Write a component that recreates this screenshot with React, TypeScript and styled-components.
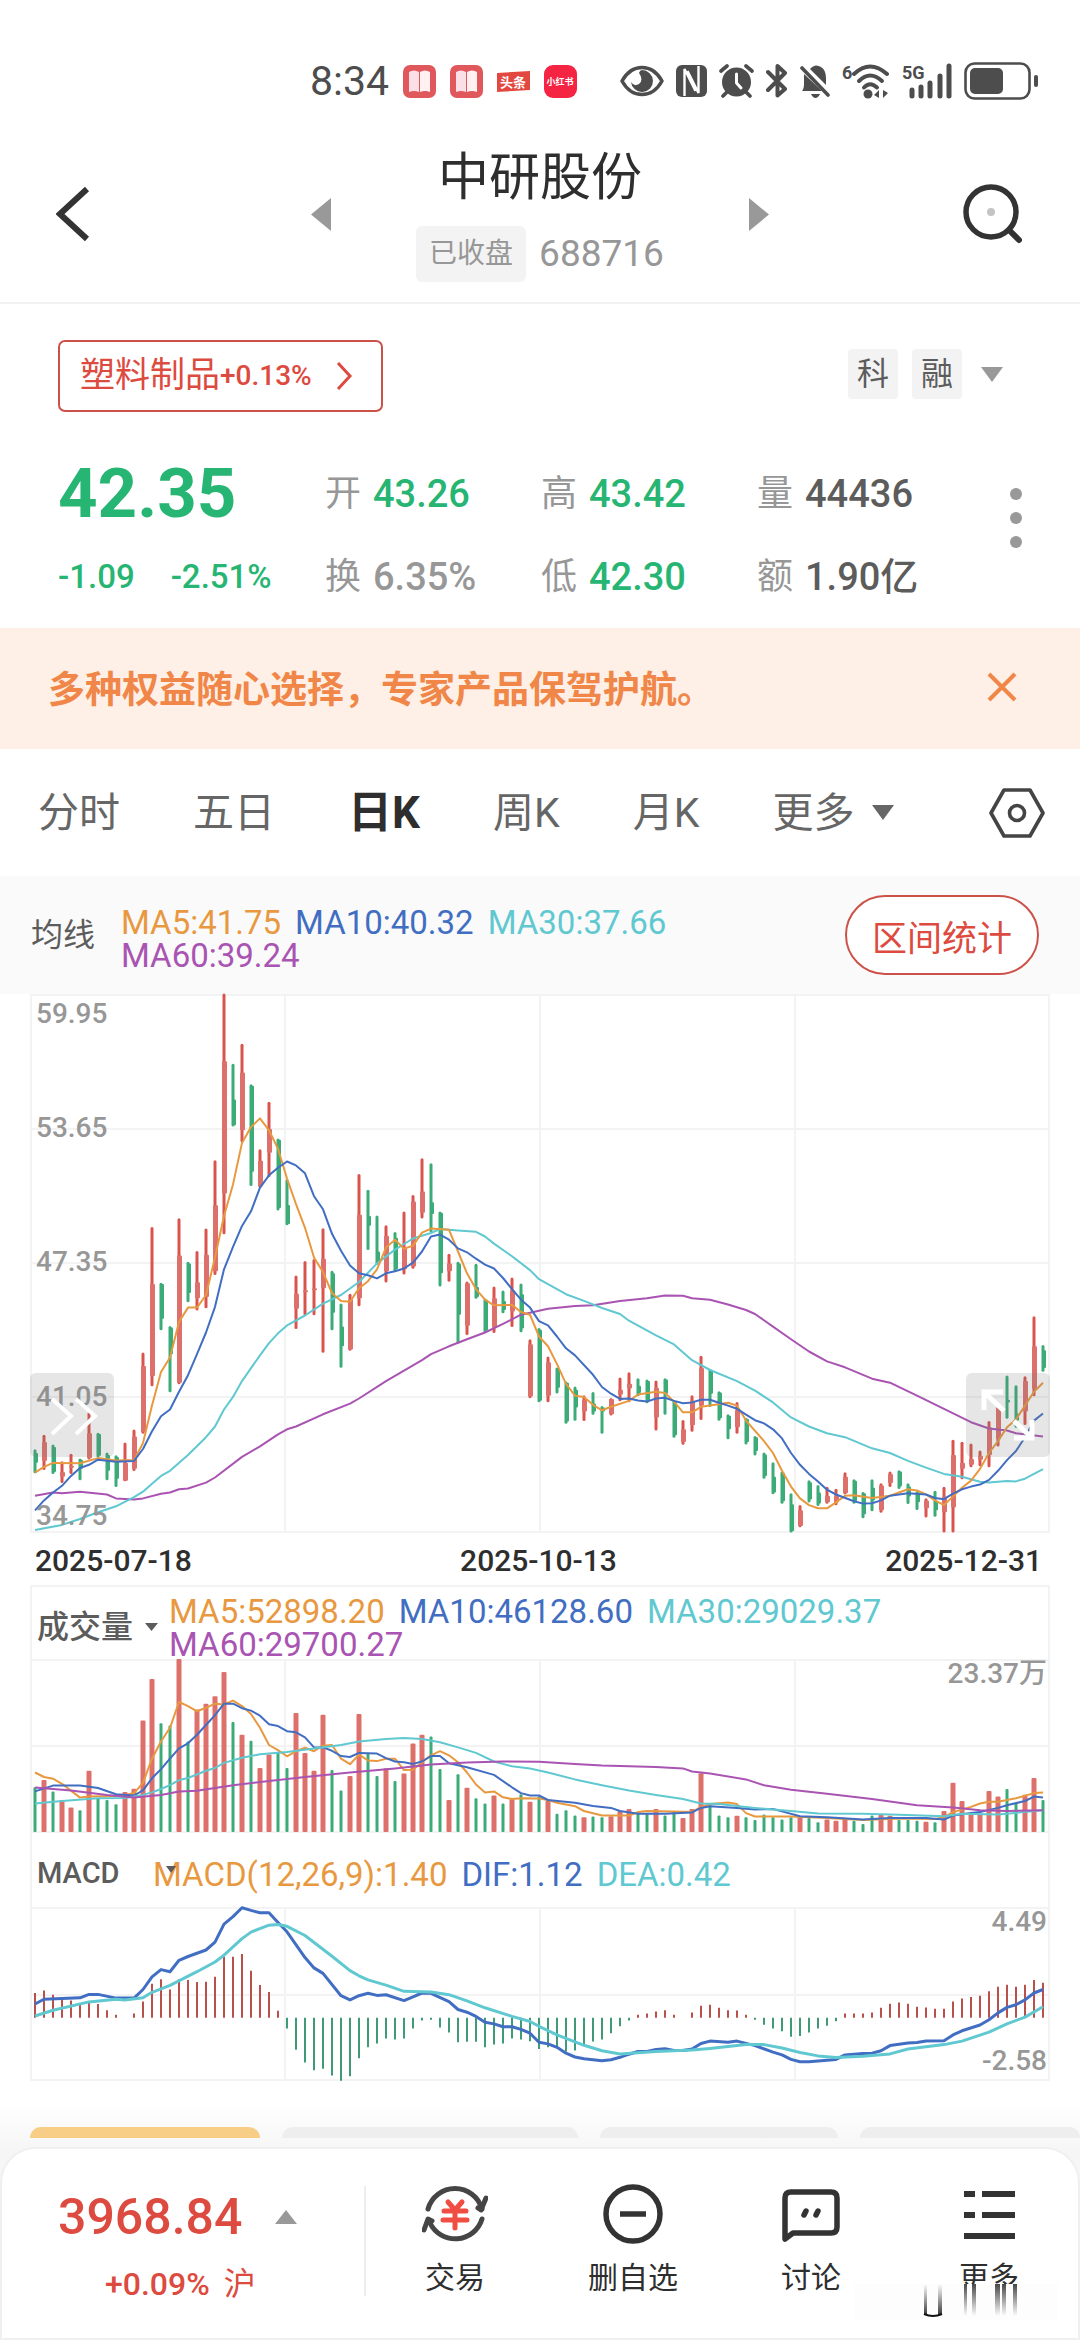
import React from "react";
import styled, { createGlobalStyle } from "styled-components";

const color = {
  ink: "#2e2e2e",
  text: "#5c5c5c",
  muted: "#979797",
  red: "#dd4a40",
  redBody: "#dd706a",
  green: "#27b573",
  candleGreen: "#3bab78",
  orange: "#e8993f",
  blue: "#416ec2",
  cyan: "#60c8d0",
  purple: "#a954b2",
  promo: "#f08648",
  grid: "#f3f3f3",
};

const sans = `Roboto, "Noto Sans CJK SC", sans-serif`;

const GlobalStyle = createGlobalStyle`
  * { box-sizing: border-box; }
  body { margin: 0; background: #fff; font-family: ${sans}; color: ${color.ink}; }
  button { font: inherit; color: inherit; background: none; border: 0; padding: 0; margin: 0; }
  svg { display: block; flex-shrink: 0; }
`;

const Page = styled.div`
  min-height: 100vh;
  display: flex;
  flex-direction: column;
  overflow: hidden;
`;

/* ---------- status bar ---------- */

const StatusBar = styled.div`
  height: 120px;
  padding: 42px 42px 0 0;
  display: flex;
  align-items: center;
  justify-content: flex-end;
  gap: 43px;
`;

const StatusGroup = styled.div<{ $gap: number }>`
  display: flex;
  align-items: center;
  gap: ${(p) => p.$gap}px;
`;

const Clock = styled.span`
  font-size: 41px;
  line-height: 48px;
  color: #4d4d4d;
`;

const BookIcon = () => (
  <svg width="33" height="33" viewBox="0 0 33 33">
    <rect width="33" height="33" rx="7" fill="#e0575c" />
    <path d="M6 7 Q11 4 16 7 V27 Q11 25 6 27 Z" fill="#fbdfe6" />
    <path d="M17 7 Q22 4 27 7 V27 Q22 25 17 27 Z" fill="#fff1f2" />
  </svg>
);

const HeadlineIcon = () => (
  <svg width="33" height="33" viewBox="0 0 33 33">
    <path d="M0 8 L33 6 V25 L0 27 Z" fill="#e2483f" />
    <text x="16" y="22" fontSize="13" fontWeight="700" fill="#fff" textAnchor="middle" fontFamily="Noto Sans CJK SC">头条</text>
  </svg>
);

const RedBookIcon = () => (
  <svg width="33" height="33" viewBox="0 0 33 33">
    <rect width="33" height="33" rx="9" fill="#f52443" />
    <text x="16" y="20" fontSize="9" fontWeight="700" fill="#fff" textAnchor="middle" fontFamily="Noto Sans CJK SC">小红书</text>
  </svg>
);

const EyeIcon = () => (
  <svg width="44" height="34" viewBox="0 0 44 34">
    <path d="M2 17 C12 -1 32 -1 42 17 C32 35 12 35 2 17 Z" fill="none" stroke="#4d4d4d" strokeWidth="3.500" strokeLinejoin="round" />
    <path d="M22 6 A11 11 0 1 1 11 18 Q14 23 19 20 Q24 16 19 9 Q20 6 22 6 Z" fill="#4d4d4d" />
  </svg>
);

const NfcIcon = () => (
  <svg width="31" height="34" viewBox="0 0 31 34">
    <rect y="1" width="31" height="32" rx="6" fill="#4d4d4d" />
    <path d="M8.500 32 V5 L19.500 27 M22.500 2 V29 L11.500 7" fill="none" stroke="#fff" strokeWidth="2.400" />
  </svg>
);

const AlarmIcon = () => (
  <svg width="35" height="34" viewBox="0 0 35 34">
    <circle cx="17.500" cy="18" r="14.500" fill="#4d4d4d" />
    <path d="M17.500 10 V19 L22 24" fill="none" stroke="#fff" strokeWidth="3" strokeLinecap="round" />
    <path d="M2 7 L8 2 M33 7 L27 2 M8 28 L4 32 M27 28 L31 32" stroke="#4d4d4d" strokeWidth="3.600" strokeLinecap="round" />
  </svg>
);

const BluetoothIcon = () => (
  <svg width="22" height="34" viewBox="0 0 22 34">
    <path d="M2 8 L19 25 L11.500 31.500 V2 L19 9 L2 26" fill="none" stroke="#4d4d4d" strokeWidth="4" strokeLinecap="round" strokeLinejoin="round" />
  </svg>
);

const MutedBellIcon = () => (
  <svg width="30" height="34" viewBox="0 0 30 34">
    <path d="M10 5 Q15 -1 21 3 Q26 6 26 14 V21 Z M4 10 L22 27 H2 Q4 25 4 20 Z" fill="#4d4d4d" />
    <path d="M2 4 L28 31" stroke="#4d4d4d" strokeWidth="3.600" strokeLinecap="round" />
    <path d="M11 30 H20 Q18 34 15.500 34 Q13 34 11 30 Z" fill="#4d4d4d" />
  </svg>
);

const WifiIcon = () => (
  <svg width="48" height="38" viewBox="0 0 48 38">
    <text x="0" y="17" fontSize="18" fontWeight="700" fill="#4d4d4d" fontFamily="Roboto">6</text>
    <g fill="none" stroke="#4d4d4d" strokeWidth="4" strokeLinecap="round">
      <path d="M12 12 Q28 -3 45 12" />
      <path d="M17 19 Q28 8 40 19" />
      <path d="M22 25.500 Q28 19 35 25.500" />
    </g>
    <circle cx="26" cy="32" r="4.500" fill="#4d4d4d" />
    <path d="M32 33 L37 28 V36 M41 28 V36 L46 31" fill="#4d4d4d" />
  </svg>
);

const SignalIcon = () => (
  <svg width="50" height="38" viewBox="0 0 50 38">
    <text x="0" y="17" fontSize="18" fontWeight="700" fill="#4d4d4d" fontFamily="Roboto">5G</text>
    <path d="M10 28 V34 M19 25 V34 M28 21 V34 M38 14 V34 M47 4 V34" stroke="#4d4d4d" strokeWidth="5" strokeLinecap="round" />
  </svg>
);

const BatteryIcon = () => (
  <svg width="74" height="38" viewBox="0 0 74 38">
    <rect x="1.500" y="1.500" width="64" height="35" rx="9" fill="none" stroke="#4d4d4d" strokeWidth="2.600" />
    <rect x="6" y="6" width="33" height="26" rx="5" fill="#4d4d4d" />
    <rect x="70" y="13" width="4" height="12" rx="2" fill="#4d4d4d" />
  </svg>
);

/* ---------- header ---------- */

const Header = styled.header`
  display: grid;
  grid-template-columns: 1fr 458px 1fr;
  align-items: center;
  padding: 26px 56px 20px;
  border-bottom: 2px solid #f2f2f2;
`;

const StockNav = styled.div`
  display: flex;
  align-items: center;
  justify-content: space-between;
`;

const StockHead = styled.div`
  display: flex;
  flex-direction: column;
  align-items: center;
  gap: 16px;
`;

const StockName = styled.h1`
  margin: 0;
  font-size: 51px;
  font-weight: 400;
  line-height: 64px;
`;

const StockMeta = styled.div`
  display: flex;
  align-items: center;
  gap: 13px;
  font-size: 37px;
  line-height: 56px;
  color: ${color.muted};
`;

const MarketState = styled.span`
  padding: 0 13px;
  border-radius: 6px;
  background: #f3f3f3;
  font-size: 28px;
`;

const EndButton = styled.button`
  justify-self: end;
`;

/* ---------- quote ---------- */

const Quote = styled.section`
  padding: 36px 57px 10px 58px;
`;

const QuoteTop = styled.div`
  display: flex;
  align-items: center;
  justify-content: space-between;
  margin-bottom: 40px;
`;

const IndustryButton = styled.button`
  display: flex;
  align-items: center;
  height: 72px;
  padding: 0 28px 0 20px;
  border: 2px solid #cc5249;
  border-radius: 7px;
  color: ${color.red};
  font-size: 35px;
  line-height: 40px;
  svg { margin-left: 24px; }
`;

const IndustryChange = styled.span`
  font-size: 28px;
  font-weight: 500;
`;

const Tags = styled.div`
  display: flex;
  align-items: center;
  gap: 14px;
  padding: 0 20px 4px 0;
  color: ${color.text};
`;

const Tag = styled.span`
  padding: 0 9px;
  border-radius: 4px;
  background: #f3f3f3;
  font-size: 32px;
  line-height: 50px;
`;

const TagToggle = styled.button`
  margin-left: 5px;
`;

const QuoteGrid = styled.div`
  display: grid;
  grid-template-columns: 267fr 216fr 216fr 216fr 50fr;
  grid-template-rows: 84px 82px;
  align-items: center;
`;

const Price = styled.div`
  font-weight: 700;
  font-size: 69px;
  line-height: 84px;
  color: ${color.green};
`;

const Change = styled.div`
  display: flex;
  gap: 36px;
  font-weight: 500;
  font-size: 33px;
  line-height: 40px;
  color: ${color.green};
`;

const Stat = styled.div`
  display: flex;
  align-items: center;
  gap: 12px;
  font-size: 36px;
  line-height: 48px;
  color: ${color.muted};
  white-space: nowrap;
`;

const StatValue = styled.span<{ $tone: string }>`
  font-weight: 500;
  font-size: 38px;
  color: ${(p) => p.$tone};
`;

const KebabButton = styled.button`
  grid-column: 5;
  grid-row: 1 / 3;
  align-self: start;
  justify-self: end;
  height: 132px;
`;

/* ---------- promo ---------- */

const Promo = styled.aside`
  display: flex;
  align-items: center;
  justify-content: space-between;
  height: 121px;
  padding: 0 62px 4px 48px;
  background: #fef0e6;
  color: ${color.promo};
  font-size: 37px;
  font-weight: 700;
`;

/* ---------- tabs ---------- */

const Tabs = styled.nav`
  display: flex;
  align-items: center;
  gap: 73px;
  height: 127px;
  padding: 0 35px 0 38px;
`;

const SettingsButton = styled.button`
  margin-left: auto;
`;

const Tab = styled.button<{ $active?: boolean }>`
  display: flex;
  align-items: center;
  gap: 18px;
  font-size: ${(p) => (p.$active ? 44 : 41)}px;
  font-weight: ${(p) => (p.$active ? 700 : 400)};
  line-height: 56px;
  white-space: nowrap;
  color: ${(p) => (p.$active ? color.ink : "#666")};
`;

/* ---------- indicator legends ---------- */

const MaStrip = styled.div`
  display: flex;
  align-items: center;
  height: 118px;
  padding: 0 41px 0 31px;
  background: #fafafa;
`;

const StripLabel = styled.span`
  width: 90px;
  padding-bottom: 6px;
  font-size: 32px;
  color: ${color.text};
`;

const Legend = styled.div`
  flex: 1;
  display: flex;
  flex-wrap: wrap;
  column-gap: 14px;
  padding-top: 8px;
  font-size: 33px;
  line-height: 33px;
`;

const LegendItem = styled.span<{ $tone: string }>`
  color: ${(p) => p.$tone};
`;

const RangeButton = styled.button`
  height: 80px;
  padding: 0 25px;
  border: 2px solid #cc5249;
  border-radius: 40px;
  background: #fff;
  color: ${color.red};
  font-size: 35px;
`;

/* ---------- charts ---------- */

const Charts = styled.main`
  padding: 0 30px;
`;

const Panel = styled.div`
  position: relative;
  svg.plot { width: 100%; height: auto; overflow: visible; }
`;

const AxisLabel = styled.span<{ $top: string; $right?: boolean }>`
  position: absolute;
  top: ${(p) => p.$top};
  ${(p) => (p.$right ? "right: 3px;" : "left: 6px;")}
  font-size: 28px;
  font-weight: 500;
  line-height: 30px;
  color: ${color.muted};
`;

const Overlay = styled.button<{ $side: "left" | "right" }>`
  position: absolute;
  ${(p) => p.$side}: 0;
  top: 379px;
  width: 84px;
  height: 84px;
  border-radius: 6px;
  background: rgba(120, 120, 120, 0.19);
`;

const Dates = styled.div`
  display: flex;
  justify-content: space-between;
  height: 52px;
  padding: 0 8px 0 5px;
  font-size: 30px;
  font-weight: 500;
  line-height: 56px;
`;

const SubHeader = styled.div<{ $height: number; $indent: number }>`
  display: grid;
  grid-template-columns: ${(p) => p.$indent}px 1fr;
  align-items: center;
  height: ${(p) => p.$height}px;
  border: 2px solid ${color.grid};
  border-width: 0 2px;
  padding-left: 5px;
`;

const SubPanels = styled.div`
  border-top: 2px solid ${color.grid};
`;

const SubSelect = styled.button`
  display: flex;
  align-items: center;
  gap: 12px;
  padding-top: 6px;
  font-size: 32px;
  font-weight: 500;
  line-height: 40px;
  white-space: nowrap;
  color: ${color.text};
`;

const MacdSelect = styled(SubSelect)`
  gap: 46px;
  font-size: 29px;
  svg { position: relative; z-index: 1; margin-bottom: 8px; }
`;

/* ---------- lower tabs and dock ---------- */

const Lower = styled.div`
  flex: 1;
  display: flex;
  flex-direction: column;
  justify-content: flex-end;
  background: linear-gradient(#fff 20px, #f6f6f6 70px);
`;

const ChipRow = styled.div`
  display: grid;
  grid-template-columns: 230fr 296fr 238fr 220fr;
  gap: 22px;
  padding: 46px 0 9px 30px;
`;

const Chip = styled.span<{ $active?: boolean }>`
  height: 11px;
  border-radius: 16px 16px 0 0;
  background: ${(p) => (p.$active ? "#f8ce86" : "#eee")};
`;

const Dock = styled.footer`
  position: relative;
  display: flex;
  align-items: center;
  height: 193px;
  padding: 0 0 5px;
  border: 2px solid #f0f0f0;
  border-radius: 36px 36px 0 0;
  background: #fff;
`;

const IndexBox = styled.button`
  width: 364px;
  height: 110px;
  display: grid;
  grid-template-columns: 181px 1fr;
  align-content: start;
  align-items: center;
  column-gap: 36px;
  row-gap: 22px;
  padding: 6px 0 0 56px;
  border-right: 2px solid #eee;
  color: ${color.red};
  text-align: left;
`;

const IndexValue = styled.span`
  font-size: 50px;
  font-weight: 500;
  line-height: 50px;
`;

const IndexChange = styled.span`
  grid-column: 1 / 3;
  padding-left: 47px;
  font-size: 32px;
  font-weight: 500;
  line-height: 40px;
`;

const Market = styled.span`
  margin-left: 14px;
  font-weight: 400;
`;

const Actions = styled.div`
  flex: 1;
  display: grid;
  grid-template-columns: repeat(4, 1fr);
`;

const Action = styled.button`
  display: flex;
  flex-direction: column;
  align-items: center;
  gap: 13px;
  font-size: 30px;
  line-height: 42px;
`;

const Smear = styled.svg`
  position: absolute;
  right: 20px;
  bottom: 18px;
`;

/* ---------- shared glyphs ---------- */

const Caret = ({ dir, w, h, fill }: { dir: "up" | "down" | "left" | "right"; w: number; h: number; fill: string }) => {
  const d = {
    up: `M0 ${h} L${w / 2} 0 L${w} ${h} Z`,
    down: `M0 0 H${w} L${w / 2} ${h} Z`,
    left: `M${w} 0 V${h} L0 ${h / 2} Z`,
    right: `M0 0 L${w} ${h / 2} L0 ${h} Z`,
  }[dir];
  return (
    <svg width={w} height={h} viewBox={`0 0 ${w} ${h}`}>
      <path d={d} fill={fill} />
    </svg>
  );
};

/* ---------- chart data: one entry per trading day ---------- */

type Side = "r" | "g";
type Candle = [Side, number, number, number, number];
type Point = [number, number];

const FIRST_X = 5;
const STEP = 9;
const dayX = (i: number) => FIRST_X + i * STEP;

// side, high, body top, body bottom, low
const candles: Candle[] = `
g1192,1200,1225,1250 r1155,1172,1220,1242 g1180,1185,1248,1252 r1222,1248,1260,1275 r1203,1232,1236,1252
g1215,1217,1240,1268 r1098,1150,1213,1215 g1150,1152,1207,1210 g1200,1205,1245,1268 g1207,1210,1265,1285
r1175,1225,1270,1270 r1142,1158,1240,1244 r947,980,1147,1150 r629,772,1005,1030 g770,772,860,888
g880,882,950,1045 r607,700,1022,1025 g717,720,795,817 r690,768,808,838 r633,698,805,832
r460,573,740,748 r38,208,543,645 g216,305,370,372 r165,237,383,412 g268,270,488,523
r432,460,525,528 r312,380,440,500 g405,407,580,585 g508,572,620,622 r752,797,835,885
r715,788,793,850 r710,783,788,850 r632,708,783,945 g740,745,845,888 g823,880,930,983
r798,810,938,940 r495,597,808,827 g535,600,625,685 g600,690,720,722 r625,650,740,767
g642,655,735,740 r590,680,735,747 r548,563,728,732 r455,538,592,605 g468,565,595,640
g590,592,745,777 r697,720,740,765 g717,720,850,922 r767,770,878,900 g722,780,805,808
g810,812,890,893 r780,808,882,895 g790,815,838,845 r757,788,842,880 g772,798,885,893
r913,925,1057,1060 g885,888,1068,1070 r957,970,1055,1070 g985,987,1035,1048 g1020,1022,1120,1125
g1033,1040,1085,1117 r1055,1065,1095,1118 g1047,1075,1095,1102 g1082,1085,1095,1150 r1062,1063,1102,1104
r1010,1040,1052,1068 r997,1025,1037,1070 g1012,1030,1048,1055 g1015,1018,1068,1073 r1018,1035,1110,1142
g1012,1014,1050,1102 g1067,1070,1155,1160 r1118,1140,1172,1178 r1055,1068,1130,1145 r955,985,1080,1115
g988,990,1050,1082 g1045,1047,1112,1117 g1103,1106,1140,1164 r1072,1092,1135,1150 g1112,1114,1172,1177
g1158,1160,1195,1205 g1200,1204,1258,1264 g1225,1260,1300,1303 g1248,1250,1322,1327 g1303,1330,1398,1400
r1333,1345,1385,1387 g1270,1274,1318,1324 g1282,1300,1328,1333 r1287,1308,1325,1327 r1292,1308,1325,1331
r1250,1260,1302,1304 g1268,1270,1322,1327 g1300,1302,1355,1364 g1268,1288,1320,1346 r1278,1282,1345,1350
r1248,1253,1276,1285 g1245,1247,1285,1290 g1278,1285,1310,1328 g1298,1300,1325,1343 r1316,1320,1340,1362
g1297,1325,1345,1360 r1287,1310,1350,1400 r1168,1205,1338,1400 r1173,1225,1240,1265 r1177,1215,1230,1235
r1195,1207,1217,1232 r1120,1135,1205,1235 r1083,1085,1165,1182 g1005,1065,1072,1112 g1030,1100,1118,1135
r1007,1018,1095,1128 r855,930,1038,1055 g928,940,985,993`
  .trim()
  .split(/\s+/)
  .map((s) => [s[0] as Side, ...s.slice(1).split(",").map(Number)] as Candle);

const parseLine = (s: string): Point[] =>
  s
    .trim()
    .split(",")
    .map((p) => p.trim().split(" ").map(Number) as Point);

const priceLines = [
  { tone: color.purple, pts: parseLine("0 1308,2 1300,3 1302,5 1298,8 1305,9 1315,11 1318,12 1315,14 1303,15 1300,16 1292,17 1290,19 1275,20 1262,23 1210,25 1183,27 1153,28 1140,29 1133,32 1102,35 1075,36 1062,39 1018,43 965,44 950,46 930,48 912,50 895,52 873,54 850,56 840,57 835,60 828,62 826,65 815,68 808,70 801,72 802,73 808,75 812,77 824,79 838,80 848,82 880,84 912,86 943,88 968,90 983,93 1012,95 1022,98 1055,101 1088,104 1122,106 1138,108 1143,109 1150,112 1158") },
  { tone: color.cyan, pts: parseLine("0 1395,3 1382,5 1367,7 1350,9 1335,11 1312,12 1298,13 1278,14 1258,15 1245,17 1205,19 1160,20 1133,21 1090,22 1058,23 1018,24 985,25 953,26 922,27 897,28 877,30 852,32 822,34 800,36 767,38 720,40 685,42 657,44 643,45 633,47 637,49 640,50 652,51 670,53 702,55 737,56 760,59 798,61 815,63 833,65 848,66 865,69 902,71 925,73 965,75 990,78 1018,80 1042,82 1072,84 1110,86 1133,88 1150,90 1160,93 1188,95 1200,97 1220,99 1237,101 1253,103 1260,105 1273,106 1275,108 1271,109 1272,110 1265,112 1241") },
  { tone: color.orange, pts: parseLine("0 1250,1 1235,2 1225,5 1226,7 1213,9 1219,11 1218,12 1175,13 1080,14 995,15 958,16 868,17 832,18 832,19 800,20 705,21 600,22 520,23 415,24 375,25 353,26 383,27 430,28 505,29 570,30 630,31 705,32 742,33 795,34 815,35 817,36 783,37 765,38 735,39 680,40 660,41 683,42 675,43 642,44 632,46 635,47 690,48 745,49 785,50 812,51 826,53 825,54 843,55 850,56 905,57 930,58 975,59 1025,60 1055,61 1058,62 1078,63 1092,64 1083,66 1068,67 1052,69 1045,70 1048,71 1070,72 1097,73 1097,74 1083,75 1080,77 1073,78 1080,79 1118,81 1170,82 1200,83 1245,84 1285,85 1315,86 1332,87 1340,88 1340,89 1325,90 1308,91 1307,93 1314,95 1308,97 1292,98 1295,99 1305,100 1320,101 1332,102 1310,103 1288,104 1270,105 1240,106 1200,107 1170,108 1135,109 1115,110 1080,111 1045,112 1022") },
  { tone: color.blue, pts: parseLine("0 1345,1 1320,2 1300,3 1283,4 1258,5 1238,6 1230,7 1217,9 1222,11 1220,12 1190,13 1145,14 1107,15 1090,16 1045,17 1003,18 950,19 895,20 830,21 735,22 678,23 625,24 588,25 528,26 497,27 478,28 462,29 472,30 492,31 550,32 583,33 645,34 688,35 725,36 745,37 750,38 758,39 745,40 740,41 733,42 718,43 690,44 652,45 647,46 660,47 682,48 692,49 708,50 723,51 733,52 757,53 785,54 812,55 832,56 866,57 877,58 905,59 935,60 953,62 1002,63 1033,64 1050,65 1063,66 1062,67 1067,68 1070,69 1062,70 1060,71 1068,72 1074,73 1072,74 1065,75 1065,76 1073,77 1080,78 1088,79 1103,80 1117,81 1125,82 1140,83 1163,84 1200,85 1230,86 1253,87 1272,88 1293,89 1305,91 1322,92 1328,93 1327,94 1320,95 1308,97 1302,99 1305,100 1314,101 1317,102 1303,103 1292,104 1285,105 1280,106 1268,107 1245,108 1218,109 1195,110 1160,111 1118,112 1100") },
];

const volumes: number[] = `603 582 615 640 662 670 555 635 640 652 617 607 409 288 417 423 230 470 377 360 338 268 413 450 468 547 508 500 547 387 503 555 392 553 612 570 390 505 570 548 585 563 476 450 455 550 640 565 604 635 650 627 650 637 623 645 630
642 680 670 685 690 688 690 687 672 666 680 680 666 685 672 692 666 562 655 685 690 686 690 698 682 690 697 690 690 692 705 697 700 692 700 710 685 683 686 698 698 700 703 705 672 590 643 682 682 614 630 608 648 625 576 640`
  .split(/\s+/)
  .map(Number);

const volumeLines = [
  { tone: color.orange, pts: parseLine("0 560,1 573,2 578,3 593,5 633,6 630,9 628,10 625,11 620,12 590,13 520,14 470,15 430,16 355,17 367,18 382,19 372,20 360,21 362,22 351,23 367,24 390,25 430,26 480,27 495,28 513,29 498,30 488,31 498,32 482,33 480,34 520,35 536,36 508,37 525,38 527,39 520,40 520,41 553,42 552,43 530,44 510,45 498,46 510,47 530,48 560,49 595,50 618,51 615,52 632,53 637,54 635,56 636,57 640,58 648,60 658,61 672,63 685,66 685,67 675,68 672,71 673,73 675,74 660,75 652,77 647,78 652,79 678,80 688,84 688,88 692,92 698,96 694,100 695,101 690,102 675,104 660,105 650,106 645,107 645,109 635,111 620,112 618") },
  { tone: color.blue, pts: parseLine("0 615,2 598,5 598,7 605,9 623,11 627,12 612,13 577,14 550,15 520,16 490,17 475,18 450,19 422,20 393,21 360,22 360,23 373,24 380,25 395,26 420,27 425,28 440,29 443,30 458,31 487,32 487,33 497,34 512,35 515,36 503,38 505,39 518,40 528,41 530,42 535,43 528,44 512,45 512,46 533,48 545,51 567,53 603,54 620,55 627,56 627,57 640,60 648,62 657,64 663,65 672,67 680,70 680,73 676,74 663,75 658,78 663,80 668,82 666,83 673,85 687,88 690,92 697,95 692,99 692,101 697,102 685,104 678,105 675,107 663,108 655,110 643,111 630,112 633") },
  { tone: color.cyan, pts: parseLine("0 650,3 643,7 635,10 634,12 625,13 618,14 608,15 597,16 582,17 576,19 555,20 547,21 532,23 517,25 507,28 500,31 490,34 480,36 470,39 463,41 460,43 463,45 472,47 487,49 503,51 528,53 542,55 548,57 560,60 580,63 597,66 612,69 625,72 637,74 650,76 652,80 663,84 672,87 679,92 680,96 683,101 687,103 680,107 682,112 670") },
  { tone: color.purple, pts: parseLine("0 604,4 612,8 625,11 633,14 625,16 615,18 613,22 597,26 585,30 573,35 560,40 548,44 537,48 531,52 528,56 529,60 535,63 540,69 544,72 548,73 557,75 563,79 580,81 597,84 610,88 622,93 637,98 655,102 662,105 670,108 672,112 670") },
];

const macdBars: number[] = `1200 1193 1205 1218 1222 1232 1225 1232 1250 1263 1272 1260 1225 1173 1160 1190 1160 1162 1168 1167 1153 1095 1095 1087 1135 1177 1197 1252 1303 1365 1402 1425 1420 1440 1455 1442 1390 1358 1347 1332 1335 1332 1303 1280 1278 1300 1315 1343 1342 1342 1358 1350 1347 1332 1335 1340 1363 1358 1358 1370 1367 1348 1341 1335 1317 1297 1280 1263 1260 1254 1250 1263 1272 1257 1237 1234 1243 1250 1251 1263 1278 1292 1303 1311 1327 1325 1315 1303 1295 1282 1260 1260 1260 1257 1243 1231 1228 1231 1240 1242 1246 1246 1225 1216 1212 1208 1195 1182 1176 1182 1176 1162 1170`
  .split(/\s+/)
  .map(Number);

const macdLines = [
  { tone: color.blue, pts: parseLine("0 1232,1 1218,5 1214,6 1204,7 1204,9 1215,11 1215,12 1190,13 1153,14 1132,15 1138,16 1105,17 1094,19 1075,20 1052,21 1000,22 978,23 952,24 960,25 967,26 967,27 995,28 1022,30 1097,31 1127,32 1143,34 1208,35 1220,36 1208,37 1201,38 1207,39 1205,41 1222,42 1211,43 1200,44 1201,46 1225,47 1248,48 1256,49 1268,50 1285,51 1290,52 1298,53 1298,54 1306,55 1317,56 1343,57 1348,58 1358,59 1375,60 1386,61 1391,63 1397,64 1394,65 1387,66 1378,67 1370,68 1370,69 1364,70 1362,71 1367,72 1367,73 1363,74 1347,75 1340,77 1343,78 1340,80 1353,82 1372,83 1380,84 1393,85 1400,86 1400,89 1393,90 1380,92 1376,93 1375,94 1368,95 1353,97 1345,98 1344,99 1340,101 1339,102 1322,103 1310,105 1293,106 1278,107 1258,108 1242,109 1234,110 1220,111 1200,112 1190") },
  { tone: color.cyan, pts: parseLine("0 1267,2 1250,6 1226,9 1218,10 1220,12 1214,13 1198,15 1178,18 1138,20 1110,21 1090,23 1042,24 1023,26 1003,27 1001,28 1006,30 1033,33 1093,35 1135,36 1150,37 1162,39 1177,41 1195,44 1197,46 1205,48 1223,50 1243,53 1268,55 1283,56 1297,58 1322,61 1352,63 1368,65 1377,67 1374,69 1370,73 1366,75 1361,79 1350,81 1350,83 1360,85 1373,87 1383,89 1388,92 1384,95 1377,97 1363,101 1350,103 1340,106 1314,108 1290,110 1270,112 1240") },
];

/* Maps raw levels to plot pixels: `top` is the level at the upper edge. */
const scaler = (top: number, bottom: number, height: number) => (v: number) => ((v - top) / (bottom - top)) * height;

const Lines = ({ lines, y, width }: { lines: { tone: string; pts: Point[] }[]; y: (v: number) => number; width: number }) => (
  <>
    {lines.map((l) => (
      <polyline
        key={l.tone}
        points={l.pts.map(([i, v]) => `${dayX(i)},${y(v).toFixed(1)}`).join(" ")}
        fill="none"
        stroke={l.tone}
        strokeWidth={width}
        strokeLinejoin="round"
      />
    ))}
  </>
);

const Grid = ({ height, rows }: { height: number; rows: number[] }) => (
  <g stroke={color.grid} strokeWidth="2" fill="none">
    <rect x="1" y="1" width="1018" height={height - 2} />
    {[255, 510, 765].map((x) => (
      <path key={x} d={`M${x} 0 V${height}`} />
    ))}
    {rows.map((r) => (
      <path key={r} d={`M0 ${r} H1020`} />
    ))}
  </g>
);

const PricePlot = () => {
  const y = scaler(38, 1400, 538);
  return (
    <svg className="plot" viewBox="0 0 1020 539">
      <Grid height={539} rows={[135, 269, 403]} />
      {candles.map(([side, high, top, bottom, low], i) => {
        const x = dayX(i);
        const red = side === "r";
        return (
          <g key={i}>
            <path d={`M${x} ${y(high) + 1} V${y(low) - 1}`} stroke={red ? "#d9544c" : color.candleGreen} strokeWidth="3" strokeLinecap="round" />
            <rect
              x={red ? x - 2 : x - 1}
              y={y(top)}
              width={red ? 5 : 4}
              height={Math.max(2, y(bottom) - y(top))}
              rx="1"
              fill={red ? color.redBody : color.candleGreen}
            />
          </g>
        );
      })}
      <Lines lines={priceLines} y={y} width={2} />
    </svg>
  );
};

const VolumePlot = () => {
  const y = scaler(230, 733, 173);
  return (
    <svg className="plot" viewBox="0 0 1020 174">
      <Grid height={174} rows={[87]} />
      {volumes.map((v, i) => {
        const red = candles[i][0] === "r";
        const w = red ? 5 : 3;
        return <rect key={i} x={dayX(i) - w / 2} y={y(v)} width={w} height={173 - y(v)} rx="1" fill={red ? color.redBody : color.candleGreen} />;
      })}
      <Lines lines={volumeLines} y={y} width={2} />
    </svg>
  );
};

const MacdPlot = () => {
  const y = scaler(950, 1453, 173);
  const zero = y(1272);
  return (
    <svg className="plot" viewBox="0 0 1020 174">
      <Grid height={174} rows={[88]} />
      {macdBars.map((v, i) => (
        <path key={i} d={`M${dayX(i)} ${zero} V${y(v)}`} stroke={v < 1272 ? "#b9504c" : "#3f9a76"} strokeWidth="2" />
      ))}
      <Lines lines={macdLines} y={y} width={3} />
    </svg>
  );
};

/* ---------- dock icons ---------- */

const TradeIcon = () => (
  <svg width="66" height="60" viewBox="0 0 66 60" fill="none" strokeLinecap="round" strokeLinejoin="round">
    <g stroke="#454545" strokeWidth="5">
      <path d="M6 25 A28 28 0 0 1 60 25" />
      <path d="M64 14 L59 26 L56 24" />
      <path d="M60 35 A28 28 0 0 1 8 39" />
      <path d="M2 46 L6 35 L10 37" />
    </g>
    <path d="M26 18 L33 26 L40 18 M22 27 H44 M21 36 H45 M33 26 V44" stroke="#f04e42" strokeWidth="5" />
  </svg>
);

const MinusIcon = () => (
  <svg width="60" height="60" viewBox="0 0 60 60" fill="none" stroke="#333" strokeWidth="5.500">
    <circle cx="30" cy="30" r="27" />
    <path d="M17 30 H43" />
  </svg>
);

const TalkIcon = () => (
  <svg width="60" height="60" viewBox="0 0 60 60" fill="none" stroke="#333" strokeWidth="5.500" strokeLinecap="round" strokeLinejoin="round">
    <path d="M4 55 V14 Q4 8 10 8 H50 Q56 8 56 14 V43 Q56 49 50 49 H12 Z" />
    <path d="M25 27 L23 31 M37 27 L35 31" />
  </svg>
);

const MenuIcon = () => (
  <svg width="60" height="60" viewBox="0 0 60 60" stroke="#333" strokeWidth="6">
    <path d="M5 10 H16 M23 10 H56 M5 31 H16 M23 31 H56 M5 52 H56" />
  </svg>
);

const actions = [
  { label: "交易", icon: <TradeIcon /> },
  { label: "删自选", icon: <MinusIcon /> },
  { label: "讨论", icon: <TalkIcon /> },
  { label: "更多", icon: <MenuIcon /> },
];

/* Vertical streaks that fade out over the lower part of the last dock label. */
const DockSmear = () => (
  <Smear width="204" height="36" viewBox="0 0 204 36" aria-hidden="true">
    <defs>
      <linearGradient id="fadeOut" x1="0" y1="0" x2="0" y2="1">
        <stop offset="0" stopColor="#333" stopOpacity="0.9" />
        <stop offset="1" stopColor="#333" stopOpacity="0" />
      </linearGradient>
      <linearGradient id="fadeIn" x1="0" y1="0" x2="0" y2="1">
        <stop offset="0" stopColor="#333" stopOpacity="0" />
        <stop offset="1" stopColor="#222" stopOpacity="0.9" />
      </linearGradient>
    </defs>
    <rect width="204" height="36" fill="#fdfdfd" />
    <g fill="url(#fadeOut)">
      <rect x="110" width="3" height="32" />
      <rect x="118" width="4" height="32" />
      <rect x="141" width="5" height="32" />
      <rect x="148" width="4" height="32" />
      <rect x="159" width="4" height="32" />
    </g>
    <g fill="url(#fadeIn)">
      <rect x="70" width="3" height="31" />
      <rect x="84" width="4" height="31" />
    </g>
    <path d="M70 30 Q79 34 88 30" fill="none" stroke="#111" strokeWidth="2" />
  </Smear>
);

export default function App() {
  return (
    <Page>
      <GlobalStyle />
      <StatusBar>
        <StatusGroup $gap={14}>
          <Clock>8:34</Clock>
          <BookIcon />
          <BookIcon />
          <HeadlineIcon />
          <RedBookIcon />
        </StatusGroup>
        <StatusGroup $gap={12}>
          <EyeIcon />
          <NfcIcon />
          <AlarmIcon />
          <BluetoothIcon />
          <MutedBellIcon />
          <WifiIcon />
          <SignalIcon />
          <BatteryIcon />
        </StatusGroup>
      </StatusBar>

      <Header>
        <button aria-label="返回">
          <svg width="36" height="58" viewBox="0 0 36 58">
            <path d="M31 4 L4 29 L31 54" fill="none" stroke="#333" strokeWidth="6" />
          </svg>
        </button>
        <StockNav>
          <button aria-label="上一只">
            <Caret dir="left" w={20} h={33} fill="#999" />
          </button>
          <StockHead>
            <StockName>中研股份</StockName>
            <StockMeta>
              <MarketState>已收盘</MarketState>
              688716
            </StockMeta>
          </StockHead>
          <button aria-label="下一只">
            <Caret dir="right" w={20} h={33} fill="#999" />
          </button>
        </StockNav>
        <EndButton aria-label="搜索">
          <svg width="62" height="62" viewBox="0 0 62 62" fill="none">
            <circle cx="29" cy="29" r="25" stroke="#333" strokeWidth="5.500" />
            <path d="M47 47 L57 57" stroke="#333" strokeWidth="6" strokeLinecap="round" />
            <circle cx="29" cy="29" r="4" fill="#c4c4c4" />
          </svg>
        </EndButton>
      </Header>

      <Quote>
        <QuoteTop>
          <IndustryButton>
            塑料制品<IndustryChange>+0.13%</IndustryChange>
            <svg width="17" height="30" viewBox="0 0 17 30">
              <path d="M2 2 L14 15 L2 28" fill="none" stroke="#dd4a40" strokeWidth="3" />
            </svg>
          </IndustryButton>
          <Tags>
            <Tag>科</Tag>
            <Tag>融</Tag>
            <TagToggle aria-label="展开">
              <Caret dir="down" w={22} h={15} fill="#999" />
            </TagToggle>
          </Tags>
        </QuoteTop>
        <QuoteGrid>
          <Price>42.35</Price>
          <Stat>开<StatValue $tone={color.green}>43.26</StatValue></Stat>
          <Stat>高<StatValue $tone={color.green}>43.42</StatValue></Stat>
          <Stat>量<StatValue $tone={color.text}>44436</StatValue></Stat>
          <KebabButton aria-label="更多行情">
            <svg width="14" height="62" viewBox="0 0 14 62" fill="#999">
              <circle cx="7" cy="7" r="6" />
              <circle cx="7" cy="31" r="6" />
              <circle cx="7" cy="55" r="6" />
            </svg>
          </KebabButton>
          <Change><span>-1.09</span><span>-2.51%</span></Change>
          <Stat>换<StatValue $tone={color.muted}>6.35%</StatValue></Stat>
          <Stat>低<StatValue $tone={color.green}>42.30</StatValue></Stat>
          <Stat>额<StatValue $tone={color.text}>1.90亿</StatValue></Stat>
        </QuoteGrid>
      </Quote>

      <Promo>
        多种权益随心选择，专家产品保驾护航。
        <button aria-label="关闭">
          <svg width="32" height="30" viewBox="0 0 32 30">
            <path d="M3 2 L29 28 M29 2 L3 28" stroke="#f08648" strokeWidth="4" />
          </svg>
        </button>
      </Promo>

      <Tabs>
        <Tab>分时</Tab>
        <Tab>五日</Tab>
        <Tab $active>日K</Tab>
        <Tab>周K</Tab>
        <Tab>月K</Tab>
        <Tab>
          更多
          <Caret dir="down" w={22} h={15} fill="#666" />
        </Tab>
        <SettingsButton aria-label="图表设置">
          <svg width="56" height="50" viewBox="0 0 56 50" fill="none" stroke="#444" strokeWidth="3.600" strokeLinejoin="round">
            <path d="M15 2 H41 L54 25 L41 48 H15 L2 25 Z" />
            <circle cx="28" cy="25" r="7.500" />
          </svg>
        </SettingsButton>
      </Tabs>

      <MaStrip>
        <StripLabel>均线</StripLabel>
        <Legend>
          <LegendItem $tone={color.orange}>MA5:41.75</LegendItem>
          <LegendItem $tone={color.blue}>MA10:40.32</LegendItem>
          <LegendItem $tone={color.cyan}>MA30:37.66</LegendItem>
          <LegendItem $tone={color.purple}>MA60:39.24</LegendItem>
        </Legend>
        <RangeButton>区间统计</RangeButton>
      </MaStrip>

      <Charts>
        <Panel>
          <PricePlot />
          <AxisLabel $top="1%">59.95</AxisLabel>
          <AxisLabel $top="22%">53.65</AxisLabel>
          <AxisLabel $top="47%">47.35</AxisLabel>
          <AxisLabel $top="72%">41.05</AxisLabel>
          <AxisLabel $top="94%">34.75</AxisLabel>
          <Overlay $side="left" aria-label="展开坐标">
            <svg width="84" height="84" viewBox="0 0 84 84" fill="none" stroke="#fff" strokeWidth="4">
              <path d="M22 26 L41 43 L22 61 M46 26 L65 43 L46 61" />
            </svg>
          </Overlay>
          <Overlay $side="right" aria-label="全屏">
            <svg width="84" height="84" viewBox="0 0 84 84" fill="none" stroke="#fff" strokeWidth="5">
              <path d="M18 37 V19 H37 M18 19 L38 38 M48 48 L66 65 M48 65 H66 V47" />
            </svg>
          </Overlay>
        </Panel>
        <Dates>
          <span>2025-07-18</span>
          <span>2025-10-13</span>
          <span>2025-12-31</span>
        </Dates>

        <SubPanels>
          <SubHeader $height={72} $indent={132}>
            <SubSelect>
              成交量
              <Caret dir="down" w={13} h={8} fill="#5c5c5c" />
            </SubSelect>
            <Legend>
              <LegendItem $tone={color.orange}>MA5:52898.20</LegendItem>
              <LegendItem $tone={color.blue}>MA10:46128.60</LegendItem>
              <LegendItem $tone={color.cyan}>MA30:29029.37</LegendItem>
              <LegendItem $tone={color.purple}>MA60:29700.27</LegendItem>
            </Legend>
          </SubHeader>
          <Panel>
            <VolumePlot />
            <AxisLabel $right $top="0">23.37万</AxisLabel>
          </Panel>
          <SubHeader $height={74} $indent={116}>
            <MacdSelect>
              MACD
              <Caret dir="down" w={10} h={7} fill="#5c5c5c" />
            </MacdSelect>
            <Legend>
              <LegendItem $tone={color.orange}>MACD(12,26,9):1.40</LegendItem>
              <LegendItem $tone={color.blue}>DIF:1.12</LegendItem>
              <LegendItem $tone={color.cyan}>DEA:0.42</LegendItem>
            </Legend>
          </SubHeader>
          <Panel>
            <MacdPlot />
            <AxisLabel $right $top="0">4.49</AxisLabel>
            <AxisLabel $right $top="80%">-2.58</AxisLabel>
          </Panel>
        </SubPanels>
      </Charts>

      <Lower>
        <ChipRow>
          <Chip $active />
          <Chip />
          <Chip />
          <Chip />
        </ChipRow>
        <Dock>
          <IndexBox>
            <IndexValue>3968.84</IndexValue>
            <Caret dir="up" w={22} h={14} fill="#999" />
            <IndexChange>
              +0.09%<Market>沪</Market>
            </IndexChange>
          </IndexBox>
          <Actions>
            {actions.map((a) => (
              <Action key={a.label}>
                {a.icon}
                {a.label}
              </Action>
            ))}
          </Actions>
          <DockSmear />
        </Dock>
      </Lower>
    </Page>
  );
}
